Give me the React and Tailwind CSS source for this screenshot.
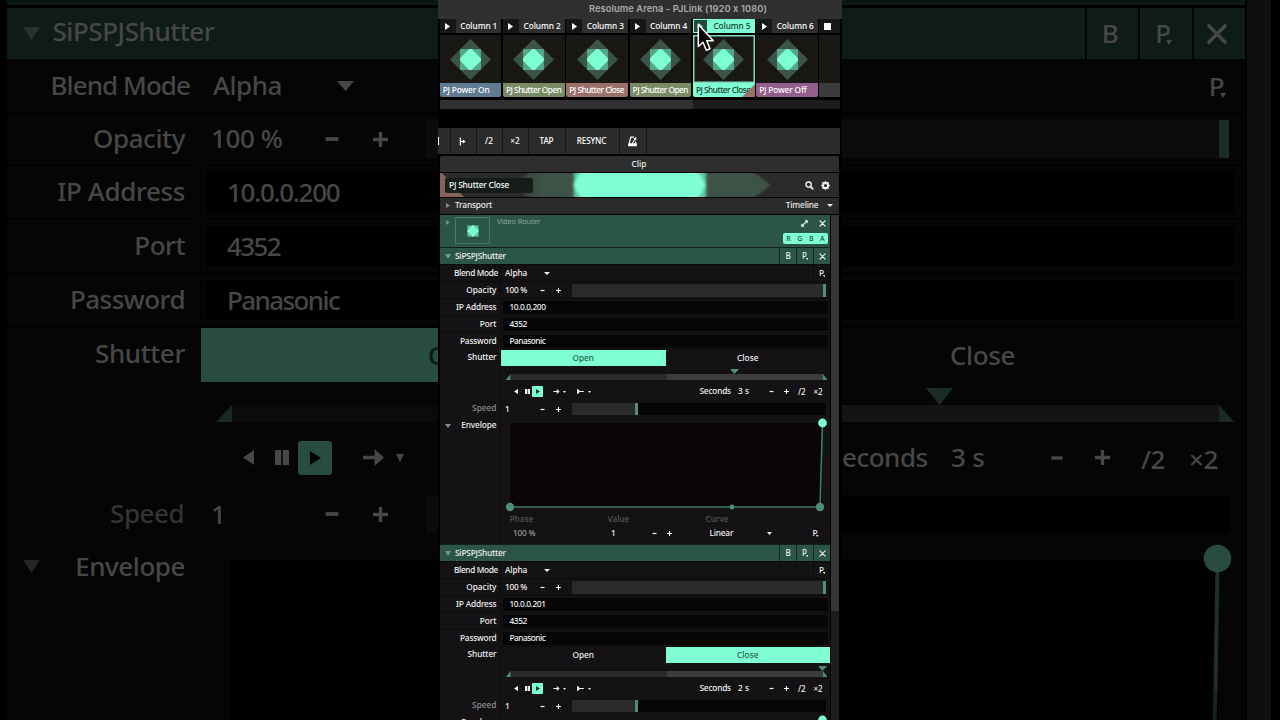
import React from "react";

const NOTO = "font-['Noto_Sans','Open_Sans',sans-serif]";

function Tri({ dir = "down", className = "" }) {
  const pts = {
    down: "0,0 10,0 5,10",
    right: "0,0 10,5 0,10",
    left: "10,0 0,5 10,10",
    cornerL: "0,10 10,0 10,10",
    cornerR: "0,0 10,10 0,10",
  };
  return (
    <svg viewBox="0 0 10 10" preserveAspectRatio="none" className={"block shrink-0 " + className}>
      <polygon points={pts[dir]} fill="currentColor" />
    </svg>
  );
}

function Minus({ className = "" }) {
  return (
    <svg viewBox="0 0 10 10" className={"block shrink-0 " + className}>
      <path d="M1 5H9" stroke="currentColor" strokeWidth="2.4" />
    </svg>
  );
}

function Plus({ className = "" }) {
  return (
    <svg viewBox="0 0 10 10" className={"block shrink-0 " + className}>
      <path d="M0 5H10M5 0V10" stroke="currentColor" strokeWidth="2.2" />
    </svg>
  );
}

function Cross({ className = "" }) {
  return (
    <svg viewBox="0 0 10 10" className={"block shrink-0 " + className}>
      <path d="M1.3 1.3L8.7 8.7M8.7 1.3L1.3 8.7" stroke="currentColor" strokeWidth="1.6" strokeLinecap="round" />
    </svg>
  );
}

function Pause({ className = "" }) {
  return (
    <svg viewBox="0 0 10 10" preserveAspectRatio="none" className={"block shrink-0 " + className}>
      <path d="M0 0H4.4V10H0ZM5.6 0H10V10H5.6Z" fill="currentColor" />
    </svg>
  );
}

function Arrow({ className = "" }) {
  return (
    <svg viewBox="0 0 20 16" className={"block shrink-0 " + className}>
      <path d="M0 6.4H11V0L20 8L11 16V9.6H0Z" fill="currentColor" />
    </svg>
  );
}

function PMark({ className = "", tri = "" }) {
  return (
    <span className={"flex items-baseline " + className}>
      P
      <Tri className={tri} />
    </span>
  );
}

const SMALL_TRI = "ml-[-1.4px] h-[2.2px] w-[2.4px] translate-y-[1px]";
const BIG_TRI = "ml-[-5px] h-[5px] w-[6px] translate-y-[2px]";

/* ---------- clip deck ---------- */

function Diamond() {
  return (
    <svg viewBox="-20 -20 40 40" className="block h-[41px] w-[41px] shrink-0">
      <polygon points="0,-20 20,0 0,20 -20,0" fill="#3c5348" />
      <rect x="-10.2" y="-10.2" width="20.4" height="20.4" fill="#55a78b" />
      <polygon points="-1.2,-10.2 1.2,-10.2 10.2,-1.2 10.2,1.2 1.2,10.2 -1.2,10.2 -10.2,1.2 -10.2,-1.2" fill="#7fffd4" />
    </svg>
  );
}

const clips = [
  { col: "Column 1", name: "PJ Power On", color: "bg-[#5f7b92]", spacing: "tracking-[-0.15px]" },
  { col: "Column 2", name: "PJ Shutter Open", color: "bg-[#788a66]" },
  { col: "Column 3", name: "PJ Shutter Close", color: "bg-[#99706a]" },
  { col: "Column 4", name: "PJ Shutter Open", color: "bg-[#788a66]" },
  { col: "Column 5", name: "PJ Shutter Close", color: "bg-[#7fffd4]", active: true },
  { col: "Column 6", name: "PJ Power Off", color: "bg-[#925f8b]", spacing: "tracking-[-0.15px]" },
];

function ClipColumn({ clip }) {
  const a = clip.active;
  return (
    <div className="flex w-[63.3px] shrink-0 flex-col pr-[1.5px]">
      <div className={"flex h-[14px] items-center text-[8.3px] font-medium " + (a ? "bg-[#7fffd4] text-[#173b30]" : "bg-[#2e2e2e] text-white")}>
        <div className={"flex items-center justify-center " + (a ? "m-px h-[12px] w-[13px] bg-[#25483d] text-[#7fffd4]" : "h-full w-[16px] bg-[#171717]")}>
          <Tri dir="right" className="h-[7px] w-[5px]" />
        </div>
        <span className="flex-1 pr-[4.2px] text-right tracking-[-0.08px] whitespace-nowrap">{clip.col}</span>
      </div>
      <div className={"mt-[2px] flex h-[48px] items-center justify-center bg-[#1a1814] " + (a ? "shadow-[inset_0_0_0_1.5px_#7fd9b8]" : "")}>
        <Diamond />
      </div>
      <div className={"relative flex h-[14px] items-center overflow-hidden rounded-b-[2px] pl-[3px] text-[8.3px] font-medium " + clip.color + (a ? " text-[#153a2f]" : " text-white")}>
        <span className={"whitespace-nowrap " + (clip.spacing || "tracking-[-0.5px]")}>{clip.name}</span>
        {a && <Tri dir="cornerL" className="absolute right-0 bottom-0 h-[13px] w-[13px] text-[#99706a]" />}
      </div>
    </div>
  );
}

function Cursor() {
  return (
    <svg viewBox="0 0 18 30" className="absolute top-[23px] left-[259px] h-[30px] w-[18px]">
      <path d="M1.3 1.5V23.5L6 19.2L9.3 27.3L13 25.7L9.7 17.8H16.3Z" fill="#050505" stroke="#fff" strokeWidth="1.5" strokeLinejoin="round" />
    </svg>
  );
}

function Deck() {
  return (
    <div className="relative h-[109px] shrink-0">
      <div className="flex h-[19px] items-center justify-end bg-[#303030] pr-[75px] pb-px font-['Inter',sans-serif] text-[9.3px] font-semibold whitespace-nowrap text-[#ababab]">
        <span className="tracking-[0.09px]">Resolume Arena - PJLink (1920 x 1080)</span>
      </div>
      <div className="flex overflow-hidden pr-[2px] pl-[1.7px]">
        {clips.map((c, i) => (
          <ClipColumn key={i} clip={c} />
        ))}
        <div className="flex flex-1 flex-col">
          <div className="flex h-[14px] items-center bg-[#171717] pl-[5px]">
            <div className="h-[7px] w-[7px] bg-white" />
          </div>
          <div className="mt-[2px] h-[48px] bg-[#1a1814]" />
          <div className="h-[14px] bg-[#3b3b3b]" />
        </div>
      </div>
      <div className="mt-[3px] mr-[2px] ml-[2px] flex h-[9px] bg-[#1c1c1c]">
        <div className="w-[253px] bg-[#303030]" />
      </div>
      <Cursor />
    </div>
  );
}

/* ---------- toolbar ---------- */

function Metronome() {
  return (
    <svg viewBox="0 0 12 12" className="h-[11px] w-[11px]">
      <path d="M7.6 1.2H4.2L1.9 10" fill="none" stroke="#fff" strokeWidth="1.3" />
      <path d="M9.2 6.2L10.1 10" fill="none" stroke="#fff" strokeWidth="1.3" />
      <path d="M1.9 8H10.1L10.9 11.3H1.1Z" fill="#fff" />
      <path d="M5.6 8.5L10 1.4" stroke="#fff" strokeWidth="1.2" />
      <circle cx="8.9" cy="3.2" r="1.3" fill="#fff" />
    </svg>
  );
}

function Toolbar() {
  const cell = "flex shrink-0 items-center justify-center border-r border-[#151515] ";
  return (
    <div className="mt-[19px] mr-[2px] flex h-[26px] shrink-0 bg-[#2b2b2b] text-[8.2px] font-medium text-white">
      <div className={cell + "w-[13px] !justify-start"}>
        <div className="h-[8px] w-px bg-white" />
      </div>
      <div className={cell + "w-[26px]"}>
        <svg viewBox="0 0 8 10" className="ml-[-2px] h-[9px] w-[7px]">
          <path d="M1.5 0.5V9.5M1 5H6" stroke="#fff" strokeWidth="1.3" />
          <polygon points="4.3,2.6 7.6,5 4.3,7.4" fill="#fff" />
        </svg>
      </div>
      <div className={cell + "w-[26px] pr-px"}>/2</div>
      <div className={cell + "w-[26px] pr-px"}>×2</div>
      <div className={cell + "w-[37px] pr-px tracking-[-0.2px]"}>TAP</div>
      <div className={cell + "w-[54px] pr-[2px] tracking-[-0.2px]"}>RESYNC</div>
      <div className={cell + "w-[27px] pr-px"}>
        <Metronome />
      </div>
    </div>
  );
}

/* ---------- clip header ---------- */

function ClipHeader() {
  return (
    <div className="mt-[2px] ml-[2px] w-[399px] shrink-0 text-[8.3px] font-medium text-[#ececec]">
      <div className="flex h-[16px] items-center justify-center rounded-t-[2px] bg-[#2e2e2e] pr-px">Clip</div>
      <div className="relative mt-px flex h-[24px] items-center overflow-hidden bg-[#2b2b2b]">
        <svg viewBox="0 0 399 24" className="absolute inset-0 h-full w-full">
          <defs>
            <filter id="soft" x="-10%" width="120%" y="-10%" height="120%">
              <feGaussianBlur stdDeviation="1.8 0.6" />
            </filter>
            <linearGradient id="fade" x1="0" x2="1" y1="0" y2="0">
              <stop offset="0" stopColor="#3c5347" stopOpacity="0.3" />
              <stop offset="0.12" stopColor="#3c5347" />
            </linearGradient>
          </defs>
          <path d="M70 12L90 -1H311Q320 2 330 12Q320 22 311 25H90Z" fill="url(#fade)" filter="url(#soft)" />
          <polygon points="0,0 2,0 24,24 0,24" fill="#87625c" />
          <rect x="134" y="-6" width="132" height="36" fill="#62c9a6" filter="url(#soft)" />
          <path d="M134 12Q136 4 146 -6H253Q263 4 265 12Q263 20 253 30H146Q136 20 134 12Z" fill="#7fffd4" filter="url(#soft)" />
        </svg>
        <div className="relative ml-[5px] flex h-[15px] w-[88px] items-center rounded-[2px] bg-[#121a16]/90 pl-[4px] tracking-[-0.16px] whitespace-nowrap text-white">
          PJ Shutter Close
        </div>
        <svg viewBox="0 0 10 10" className="relative ml-[272px] h-[9px] w-[9px]">
          <circle cx="4" cy="4" r="2.9" fill="none" stroke="#f2f2f2" strokeWidth="1.5" />
          <path d="M6.2 6.2L9.2 9.2" stroke="#f2f2f2" strokeWidth="1.9" />
        </svg>
        <svg viewBox="-5 -5 10 10" className="relative ml-[7px] h-[9px] w-[9px]">
          <circle r="2.8" fill="none" stroke="#f2f2f2" strokeWidth="2" />
          <path d="M0 -4.8V-3M0 3V4.8M-4.8 0H-3M3 0H4.8M-3.4 -3.4L-2.2 -2.2M3.4 3.4L2.2 2.2M-3.4 3.4L-2.2 2.2M3.4 -3.4L2.2 -2.2" stroke="#f2f2f2" strokeWidth="1.8" />
        </svg>
      </div>
      <div className="mt-px flex h-[16px] items-center bg-[#2b2b2b] pb-px">
        <Tri dir="right" className="ml-[6px] h-[5px] w-[4px] text-[#8b8b8b]" />
        <span className="ml-[5px] tracking-[-0.15px]">Transport</span>
        <span className="ml-auto tracking-[-0.15px]">Timeline</span>
        <Tri className="mr-[6.5px] ml-[8px] h-[3px] w-[6px]" />
      </div>
    </div>
  );
}

function Router() {
  return (
    <div className="flex h-[32px] shrink-0 bg-[#2b5548] text-white">
      <Tri dir="right" className="mt-[5px] ml-[6px] h-[5px] w-[4px] text-[#6f9084]" />
      <div className="mt-[2px] ml-[5px] flex h-[27px] w-[35px] items-center justify-center border border-[#4a7768]">
        <svg viewBox="-6 -6 12 12" className="h-[12px] w-[12px]">
          <rect x="-5.6" y="-5.6" width="11.2" height="11.2" fill="#5cc4a2" />
          <polygon points="0,-6 6,0 0,6 -6,0" fill="#7fffd4" />
        </svg>
      </div>
      <span className="mt-px ml-[7px] text-[7.3px] leading-[11px] tracking-[-0.08px] whitespace-nowrap text-[#8da69d]">Video Router</span>
      <div className="mr-[2px] ml-auto flex w-[45px] flex-col">
        <div className="mt-[4px] flex h-[8px] items-center justify-end pr-[2.5px]">
          <svg viewBox="0 0 8 8" className="h-[7px] w-[7px]">
            <path d="M1.5 6.5L6.5 1.5" stroke="#fff" strokeWidth="1.3" />
            <path d="M4 0.3H7.7V4ZM0.3 4V7.7H4Z" fill="#fff" />
          </svg>
          <Cross className="ml-[11px] h-[7px] w-[7px]" />
        </div>
        <div className="mt-[6px] flex h-[11px] items-center justify-around rounded-[2px] bg-[#7fffd4] text-[7px] font-medium text-[#1d4d3e]">
          <span>R</span>
          <span>G</span>
          <span>B</span>
          <span>A</span>
        </div>
      </div>
    </div>
  );
}

/* ---------- effect panel ---------- */

function Label({ children, className = "" }) {
  return (
    <div className={"flex h-full w-[61px] shrink-0 items-center justify-end border-r border-[#0c0a0c] pr-[3.5px] whitespace-nowrap " + className}>
      {children}
    </div>
  );
}

function Stepper() {
  return (
    <>
      <Minus className="h-[5px] w-[5px]" />
      <Plus className="ml-[10.5px] h-[5px] w-[5px]" />
    </>
  );
}

const row = "flex h-[17px] shrink-0 items-center border-t border-[#0c0a0c] ";

function TextField({ label, value, spacing = "", labelSpacing = "" }) {
  return (
    <div className={row}>
      <Label className={labelSpacing}>{label}</Label>
      <div className={"ml-[2px] flex h-[13px] w-[325px] items-center rounded-[1px] bg-[#060506] pl-[6.5px] " + spacing}>{value}</div>
    </div>
  );
}

function Effect({ ip, open, seconds, marker }) {
  const on = "bg-[#7fffd4] text-[#24634f]";
  const headCell = "flex h-full w-[17px] items-center justify-center border-l border-[#132a22]";
  return (
    <div className="flex h-[297px] shrink-0 flex-col bg-[#151216] text-[8.3px] font-medium text-[#f0f0f0]">
      <div className="flex h-[17px] shrink-0 items-center border-t border-[#10211b] bg-[#2b5548]">
        <Tri className="ml-[5px] h-[5px] w-[6px] text-[#77978b]" />
        <span className="ml-[4px] tracking-[-0.2px]">SiPSPJShutter</span>
        <div className="ml-auto flex h-full items-center text-[8px]">
          <div className={headCell}>B</div>
          <div className={headCell}>
            <PMark tri={SMALL_TRI} />
          </div>
          <div className={headCell}>
            <Cross className="h-[7px] w-[7px]" />
          </div>
        </div>
      </div>
      <div className={row}>
        <Label className="!pr-[2px] tracking-[-0.35px]">Blend Mode</Label>
        <span className="ml-[4px] w-[39px] tracking-[-0.1px]">Alpha</span>
        <Tri className="h-[3px] w-[6px]" />
        <div className="ml-auto flex h-full w-[17px] items-center justify-center border-l border-[#0c0a0c]">
          <PMark tri={SMALL_TRI} />
        </div>
      </div>
      <div className={row}>
        <Label>Opacity</Label>
        <span className="ml-[4px] w-[35px] tracking-[-0.3px]">100 %</span>
        <Stepper />
        <div className="ml-[11px] flex h-[13px] w-[254px] justify-end bg-[#2a2a2a]">
          <div className="w-[3px] bg-[#4f8f7a]" />
        </div>
      </div>
      <TextField label="IP Address" value={ip} spacing="tracking-[-0.4px]" labelSpacing="tracking-[-0.15px]" />
      <TextField label="Port" value="4352" spacing="tracking-[-0.4px]" />
      <TextField label="Password" value="Panasonic" spacing="tracking-[-0.5px]" labelSpacing="tracking-[-0.2px]" />
      <div className="flex h-[17px] shrink-0 items-center">
        <Label className="tracking-[-0.1px]">Shutter</Label>
        <div className="flex h-full w-[329px] border-t border-[#0c0a0c]">
          <div className={"flex flex-1 items-center justify-center " + (open ? on : "")}>Open</div>
          <div className={"flex flex-1 items-center justify-center " + (open ? "" : on)}>Close</div>
        </div>
      </div>
      <div className="flex grow">
        <div className="flex w-[61px] shrink-0 flex-col border-r border-[#0c0a0c]">
          <div className="mt-[35px] flex h-[15px] items-center justify-end pr-[3.5px] text-[#8e8e8e]">Speed</div>
          <div className="mt-[2px] flex h-[15px] items-center">
            <Tri className="ml-[5px] h-[4px] w-[6px] text-[#8b8b8b]" />
            <span className="mr-[3.5px] ml-auto tracking-[-0.1px]">Envelope</span>
          </div>
        </div>
        <div className="flex w-[330px] flex-col">
          <div className="relative mt-[8px] flex h-[6px] items-stretch pl-[5px]">
            <Tri dir="cornerL" className="h-[6px] w-[4.5px] text-[#4f8f7a]" />
            <div className="w-[156px] bg-[#2a2a2a]" />
            <div className="w-[156px] bg-[#3d3d3d]" />
            <Tri dir="cornerR" className="h-[6px] w-[4.5px] text-[#4f8f7a]" />
            <Tri className={"absolute top-[-5px] h-[5px] w-[9px] text-[#4f8f7a] " + marker} />
          </div>
          <div className="mt-[6px] flex h-[11px] items-center pl-[13px]">
            <Tri dir="left" className="h-[5px] w-[4px]" />
            <Pause className="ml-[6.5px] h-[5px] w-[5px]" />
            <div className="ml-[2.5px] flex h-[11px] w-[11px] items-center justify-center rounded-[1px] bg-[#7fffd4] text-[#12382d]">
              <Tri dir="right" className="h-[5px] w-[4px]" />
            </div>
            <Arrow className="ml-[10px] h-[5px] w-[7px]" />
            <Tri className="ml-[3px] h-[2px] w-[3px]" />
            <svg viewBox="0 0 16 12" className="ml-[10.5px] h-[5px] w-[7px]">
              <path d="M1 0V12M1 6H16" stroke="currentColor" strokeWidth="2.6" />
              <polygon points="2,1 8,6 2,11" fill="currentColor" />
            </svg>
            <Tri className="ml-[4px] h-[2px] w-[3px]" />
            <span className="ml-[109px] w-[38.5px] tracking-[-0.2px] whitespace-nowrap">Seconds</span>
            <span className="w-[31px] whitespace-nowrap">{seconds} s</span>
            <Minus className="h-[5px] w-[5px]" />
            <Plus className="ml-[9.5px] h-[5px] w-[5px]" />
            <span className="ml-[9.5px] w-[15.5px] text-[8px]">/2</span>
            <span className="text-[8px]">×2</span>
          </div>
          <div className="mt-[6px] flex h-[12px] items-center">
            <span className="ml-[4px] w-[35px]">1</span>
            <Stepper />
            <div className="ml-[11px] flex h-full w-[254px] bg-[#060506]">
              <div className="w-[63px] bg-[#2a2a2a]" />
              <div className="w-[3px] bg-[#4f8f7a]" />
            </div>
          </div>
          <svg viewBox="0 0 330 98" className="mt-[1px] block h-[98px] w-[330px] shrink-0">
            <rect x="9" y="7" width="312" height="84" fill="#0a0506" />
            <path d="M9 91H319L321.5 7" fill="none" stroke="#417a66" strokeWidth="1.6" />
            <circle cx="9" cy="91" r="4.2" fill="#4f8f7a" />
            <circle cx="231" cy="91" r="2.4" fill="#4f8f7a" />
            <circle cx="319" cy="91" r="4.2" fill="#4f8f7a" />
            <circle cx="321.5" cy="7" r="4.4" fill="#7fffd4" />
          </svg>
          <div className="flex h-[10px] items-center pl-[8.5px] text-[#555555]">
            <span className="w-[98px]">Phase</span>
            <span className="w-[98px]">Value</span>
            <span>Curve</span>
          </div>
          <div className="mt-[3px] flex h-[12px] items-center pl-[12px]">
            <span className="w-[98px] tracking-[-0.25px] text-[#9a9a9a]">100 %</span>
            <span className="w-[40.5px]">1</span>
            <Minus className="h-[5px] w-[5px]" />
            <Plus className="ml-[10px] h-[5px] w-[5px]" />
            <span className="ml-[38px] w-[57.5px] tracking-[-0.2px]">Linear</span>
            <Tri className="h-[3px] w-[5px]" />
            <PMark className="ml-[40.5px]" tri={SMALL_TRI} />
          </div>
        </div>
      </div>
    </div>
  );
}

function Center() {
  return (
    <div className="flex h-[720px] w-[404px] shrink-0 flex-col overflow-hidden bg-black">
      <Deck />
      <Toolbar />
      <ClipHeader />
      <div className="mt-px ml-[2px] flex w-[399px] grow overflow-hidden bg-[#1d1d1d]">
        <div className="flex h-[505px] w-[391px] flex-col overflow-hidden border-r border-black">
          <Router />
          <Effect ip="10.0.0.200" open seconds={3} marker="left-[229px]" />
          <Effect ip="10.0.0.201" open={false} seconds={2} marker="left-[317px]" />
        </div>
        <div className="h-[396px] w-[8px] bg-[#363636]" />
      </div>
    </div>
  );
}

/* ---------- enlarged side panels ---------- */

const bigRow = "flex shrink-0 items-center border-b-2 border-[#010101] ";

function BigLabel({ children, className = "" }) {
  return (
    <div className={"flex h-full w-[194px] shrink-0 items-center justify-end border-r-2 border-[#010101] pr-[14px] pb-[2px] whitespace-nowrap " + className}>
      {children}
    </div>
  );
}

function BigField({ label, value, h, ls = "", vs = "" }) {
  return (
    <div className={bigRow + h}>
      <BigLabel className={ls}>{label}</BigLabel>
      <div className={"ml-[5px] flex h-[40px] grow items-center rounded-l-[4px] bg-black pb-px pl-[21px] " + vs}>{value}</div>
    </div>
  );
}

function LeftSide() {
  return (
    <div className="flex h-[720px] w-[438px] shrink-0 flex-col overflow-hidden bg-black pl-[7px] text-[26px] leading-none font-medium text-[#474747]">
      <div className="h-[5px] shrink-0 bg-[#0c1814]" />
      <div className="mt-[3px] flex h-[51px] shrink-0 items-center bg-[#0e1b17]">
        <Tri className="ml-[15.5px] h-[13px] w-[17px] text-[#2b312e]" />
        <span className="ml-[13px] pb-[5px] tracking-[-0.45px]">SiPSPJShutter</span>
      </div>
      <div className="flex grow flex-col bg-[#050505]">
        <div className={bigRow + "h-[55px]"}>
          <BigLabel className="!pr-[9px] tracking-[-0.95px]">Blend Mode</BigLabel>
          <span className="ml-[12px] w-[124px] pb-[2px] tracking-[-0.5px]">Alpha</span>
          <Tri className="h-[10px] w-[17px]" />
        </div>
        <div className={bigRow + "h-[52px]"}>
          <BigLabel className="tracking-[-0.4px]">Opacity</BigLabel>
          <span className="ml-[10px] w-[113px] pb-[2px] tracking-[-0.4px]">100 %</span>
          <Minus className="h-[16px] w-[16px]" />
          <Plus className="ml-[33px] h-[15px] w-[15px]" />
          <div className="ml-[38px] h-[38px] grow bg-[#0c0c0c]" />
        </div>
        <BigField label="IP Address" value="10.0.0.200" h="h-[54px]" ls="tracking-[-0.4px]" vs="tracking-[-1.3px]" />
        <BigField label="Port" value="4352" h="h-[54px]" ls="tracking-[-0.5px]" vs="tracking-[-1.6px]" />
        <BigField label="Password" value="Panasonic" h="h-[54px]" ls="tracking-[-0.55px]" vs="tracking-[-1.6px]" />
        <div className="flex h-[54px] shrink-0 items-center">
          <BigLabel className="pb-[4px] tracking-[-0.4px]">Shutter</BigLabel>
          <div className="flex h-[54px] grow items-center overflow-hidden bg-[#284d40]">
            <span className="ml-[227px] text-[#0a1611]">O</span>
          </div>
        </div>
        <div className="flex grow">
          <div className="flex w-[194px] shrink-0 flex-col border-r-2 border-[#010101]">
            <div className="mt-[112px] flex h-[38px] items-center justify-end pr-[15px] tracking-[-0.5px] text-[#333333]">Speed</div>
            <div className="mt-[15px] flex h-[38px] items-center">
              <Tri className="ml-[15.5px] h-[13px] w-[17px] text-[#262626]" />
              <span className="mr-[14px] ml-auto tracking-[-0.45px]">Envelope</span>
            </div>
          </div>
          <div className="flex grow flex-col">
            <div className="mt-[23px] flex h-[17px] pl-[15px]">
              <Tri dir="cornerL" className="h-[17px] w-[16px] text-[#182a24]" />
              <div className="grow bg-[#0b0b0b]" />
            </div>
            <div className="mt-[18px] flex h-[35px] items-center pl-[42px]">
              <Tri dir="left" className="h-[15px] w-[11px]" />
              <Pause className="ml-[21px] h-[15px] w-[14px]" />
              <div className="ml-[9px] flex h-[34px] w-[34px] items-center justify-center rounded-[3px] bg-[#284d40] text-[#020403]">
                <Tri dir="right" className="h-[14px] w-[11px]" />
              </div>
              <Arrow className="ml-[31px] h-[17px] w-[21px]" />
              <Tri className="ml-[12px] h-[8px] w-[8px]" />
            </div>
            <div className="mt-[20px] flex h-[38px] items-center">
              <span className="ml-[10px] w-[113px]">1</span>
              <Minus className="h-[16px] w-[16px]" />
              <Plus className="ml-[33px] h-[15px] w-[15px]" />
              <div className="ml-[38px] h-[38px] grow bg-[#0c0c0c]" />
            </div>
            <div className="mt-[26px] ml-[28px] grow bg-black" />
          </div>
        </div>
      </div>
    </div>
  );
}

function RightSide() {
  const cell = "flex h-full w-[53.5px] items-center justify-center border-l-2 border-[#020403] pr-[4px] ";
  return (
    <div className="flex h-[720px] w-[438px] shrink-0 overflow-hidden bg-black text-[26px] leading-none font-medium text-[#474747]">
      <div className="flex w-[403px] shrink-0 flex-col">
        <div className="h-[5px] shrink-0 bg-[#0c1814]" />
        <div className="mt-[3px] flex h-[51px] shrink-0 items-center justify-end bg-[#0e1b17]">
          <div className={cell + "pb-[2px]"}>B</div>
          <div className={cell + "pb-[2px]"}>
            <PMark tri={BIG_TRI} />
          </div>
          <div className={cell}>
            <Cross className="h-[22px] w-[22px]" />
          </div>
        </div>
        <div className="flex grow flex-col bg-[#050505]">
          <div className={bigRow + "h-[55px] justify-end"}>
            <div className={cell}>
              <PMark tri={BIG_TRI} />
            </div>
          </div>
          <div className={bigRow + "h-[52px]"}>
            <div className="flex h-[38px] w-[387px] justify-end bg-[#0c0c0c]">
              <div className="w-[10px] bg-[#1b2c27]" />
            </div>
          </div>
          {["h-[54px]", "h-[54px]", "h-[54px]"].map((h, i) => (
            <div key={i} className={bigRow + h}>
              <div className="h-[40px] w-[393px] rounded-r-[4px] bg-black" />
            </div>
          ))}
          <div className="flex h-[54px] shrink-0 items-center pl-[108px]">
            <span className="pb-px tracking-[-0.4px]">Close</span>
          </div>
          <div className="relative mt-[23px] flex h-[17px] shrink-0">
            <div className="w-[377px] bg-[#141414]" />
            <Tri dir="cornerR" className="h-[17px] w-[15px] text-[#1b2c27]" />
            <Tri className="absolute top-[-17px] left-[84px] h-[17px] w-[27px] text-[#1b2c27]" />
          </div>
          <div className="mt-[18px] flex h-[35px] shrink-0 items-center">
            <span className="w-[109px] pb-px tracking-[-0.5px]">econds</span>
            <span className="w-[99px] pb-px tracking-[-0.2px] whitespace-nowrap">3 s</span>
            <Minus className="h-[14px] w-[14px]" />
            <Plus className="ml-[31px] h-[15px] w-[15px]" />
            <span className="ml-[31px] w-[48px] pt-[3px] tracking-[-0.4px]">/2</span>
            <span className="pt-[3px] tracking-[-0.4px]">×2</span>
          </div>
          <div className="mt-[20px] h-[38px] w-[387px] shrink-0 bg-black" />
          <svg viewBox="0 0 403 187" className="h-[187px] w-[403px] shrink-0">
            <rect x="0" y="26" width="376" height="161" fill="#000" />
            <path d="M375.5 26L373.5 157" stroke="#1f302a" strokeWidth="4" />
            <path d="M373.5 157L372.5 187" stroke="#14241e" strokeWidth="4" />
            <circle cx="375.5" cy="25.5" r="13.7" fill="#284d40" />
          </svg>
        </div>
      </div>
      <div className="ml-[2px] w-[24px] bg-[#0f0f0f]" />
    </div>
  );
}

export default function App() {
  return (
    <div className={"flex h-[720px] w-[1280px] overflow-hidden bg-black leading-none " + NOTO}>
      <LeftSide />
      <Center />
      <RightSide />
    </div>
  );
}
